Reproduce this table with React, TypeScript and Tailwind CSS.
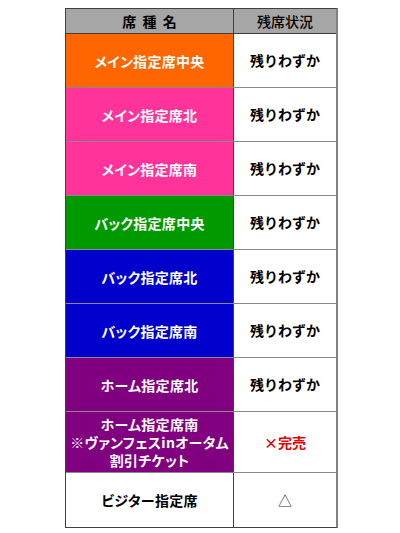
const rows: { name: string[]; bg: string; status: string; h: string; red?: boolean; dark?: boolean }[] = [
  { name: ['メイン指定席中央'], bg: 'bg-[#ff6600]', status: '残りわずか', h: 'h-[54px]' },
  { name: ['メイン指定席北'], bg: 'bg-[#ff3399]', status: '残りわずか', h: 'h-[54px]' },
  { name: ['メイン指定席南'], bg: 'bg-[#ff3399]', status: '残りわずか', h: 'h-[54px]' },
  { name: ['バック指定席中央'], bg: 'bg-[#009900]', status: '残りわずか', h: 'h-[54px]' },
  { name: ['バック指定席北'], bg: 'bg-[#0000cc]', status: '残りわずか', h: 'h-[54px]' },
  { name: ['バック指定席南'], bg: 'bg-[#0000cc]', status: '残りわずか', h: 'h-[54px]' },
  { name: ['ホーム指定席北'], bg: 'bg-[#800080]', status: '残りわずか', h: 'h-[54px]' },
  {
    name: ['ホーム指定席南', '※ヴァンフェスinオータム', '割引チケット'],
    bg: 'bg-[#800080]',
    status: '×完売',
    h: 'h-[61px]',
    red: true,
  },
  { name: ['ビジター指定席'], bg: 'bg-white', status: '△', h: 'h-[54px]', dark: true },
];

export default function App() {
  return (
    <div
      className="w-[400px] h-[533px] bg-white pt-[8px] pl-[65px]"
      style={{ fontFamily: '"Noto Sans CJK JP", "Noto Sans", sans-serif' }}
    >
      <div className="w-[273px] border border-[#404040] border-r-2 border-r-[#808080]">
        {/* Header */}
        <div className="flex h-[25px] bg-[#a6a6a6] border-b border-[#404040] text-[14px] font-bold text-black">
          <div className="w-[168px] flex items-center justify-center border-r border-[#404040] tracking-[0.45em] pl-[0.45em]">
            席種名
          </div>
          <div className="flex-1 flex items-center justify-center font-medium">残席状況</div>
        </div>

        {rows.map((r, i) => (
          <div
            key={i}
            className={`flex ${r.h} ${i < rows.length - 1 ? 'border-b border-[#8a8a8a]' : ''}`}
          >
            <div
              className={`w-[168px] ${r.bg} flex flex-col items-center justify-center border-r border-[#404040] text-[14px] font-bold leading-[18px] ${
                r.dark ? 'text-black' : 'text-white'
              }`}
            >
              {r.name.map((n) => (
                <span key={n} className="[font-feature-settings:'palt'] tracking-[0.02em]">
                  {n}
                </span>
              ))}
            </div>
            <div
              className={`flex-1 flex items-center justify-center text-[14px] ${
                r.red ? 'text-[#e60000] font-bold' : r.status === '△' ? 'text-[#333] font-normal' : 'text-black font-bold'
              }`}
            >
              {r.status}
            </div>
          </div>
        ))}
      </div>
    </div>
  );
}
